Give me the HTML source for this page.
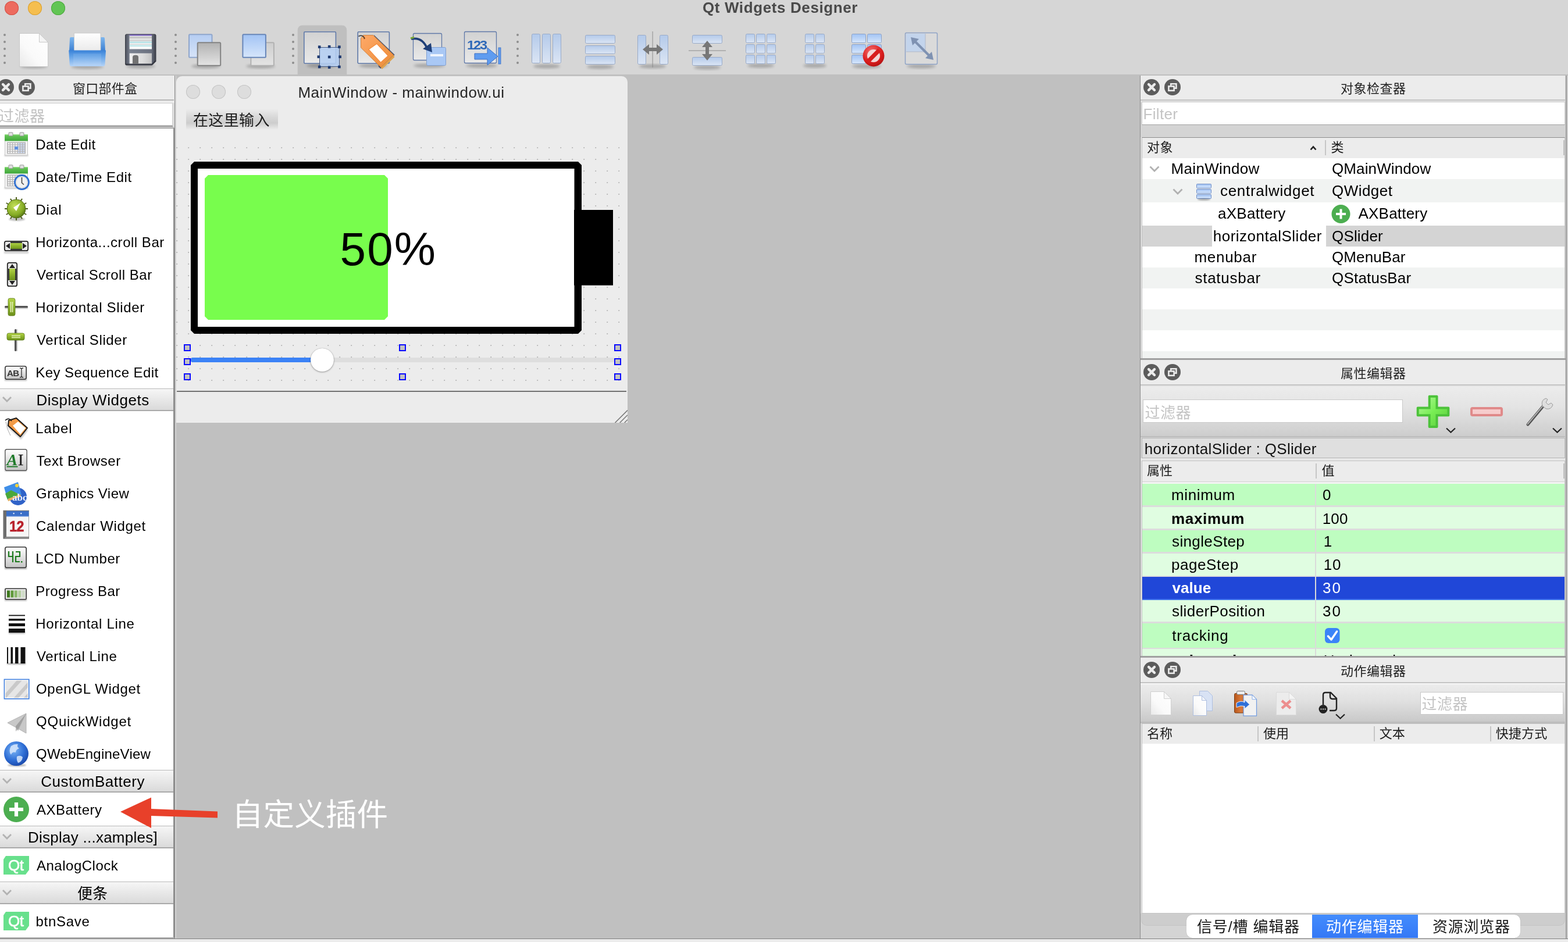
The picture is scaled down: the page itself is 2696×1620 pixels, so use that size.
<!DOCTYPE html><html><head><meta charset="utf-8"><title>Qt Widgets Designer</title><style>
html,body{margin:0;padding:0}
html{opacity:0.9999}
body{width:2696px;height:1620px;overflow:hidden;background:#d6d6d6;position:relative;font-family:"Liberation Sans",sans-serif;}
.b{position:absolute;display:block}
.t{position:absolute;white-space:nowrap;line-height:1;display:block}
.c{font-family:"Liberation Sans","Noto Sans CJK SC",sans-serif;}
</style></head><body><svg width="0" height="0" style="position:absolute"><defs>
<linearGradient id="gBlue" x1="0" y1="0" x2="0" y2="1"><stop offset="0" stop-color="#b4caea"/><stop offset="1" stop-color="#dbe5f4"/></linearGradient>
<linearGradient id="gGray" x1="0" y1="0" x2="0" y2="1"><stop offset="0" stop-color="#b2b2b2"/><stop offset="1" stop-color="#e4e4e4"/></linearGradient>
<linearGradient id="gGray2" x1="0" y1="0" x2="0" y2="1"><stop offset="0" stop-color="#cecece"/><stop offset="1" stop-color="#e4e4e4"/></linearGradient><linearGradient id="gWall" x1="0" y1="0" x2="0" y2="1"><stop offset="0" stop-color="#7db6ee"/><stop offset="1" stop-color="#3b7fd2"/></linearGradient><linearGradient id="gPaper" x1="0" y1="0" x2="0" y2="1"><stop offset="0" stop-color="#ffffff"/><stop offset="1" stop-color="#e9e9e9"/></linearGradient><linearGradient id="gFloppy" x1="0" y1="0" x2="1" y2="0"><stop offset="0" stop-color="#4c505c"/><stop offset="0.15" stop-color="#7b8290"/><stop offset="0.85" stop-color="#6b717f"/><stop offset="1" stop-color="#3c3f49"/></linearGradient><linearGradient id="gShut" x1="0" y1="0" x2="1" y2="0"><stop offset="0" stop-color="#f0f0f0"/><stop offset="0.6" stop-color="#dcdcdc"/><stop offset="1" stop-color="#c4c4c4"/></linearGradient><linearGradient id="gTag" x1="0" y1="0" x2="1" y2="1"><stop offset="0" stop-color="#ffa968"/><stop offset="1" stop-color="#ea8c38"/></linearGradient>
<linearGradient id="gDoc" x1="1" y1="0" x2="0" y2="1"><stop offset="0" stop-color="#ffffff"/><stop offset="0.6" stop-color="#fafafa"/><stop offset="1" stop-color="#e9e9e9"/></linearGradient><linearGradient id="gClip" x1="0" y1="0" x2="1" y2="0"><stop offset="0" stop-color="#b8571c"/><stop offset="0.5" stop-color="#d97a3a"/><stop offset="1" stop-color="#c0602a"/></linearGradient>
<linearGradient id="gTray" x1="0" y1="0" x2="0" y2="1"><stop offset="0" stop-color="#3a82d8"/><stop offset="0.35" stop-color="#5e9fe6"/><stop offset="1" stop-color="#b4d3f7"/></linearGradient>
<linearGradient id="gSq" x1="0" y1="0" x2="0" y2="1"><stop offset="0" stop-color="#d2d2d2"/><stop offset="1" stop-color="#e9e9e9"/></linearGradient>
<linearGradient id="gLB" x1="0" y1="0" x2="0" y2="1"><stop offset="0" stop-color="#a2c3f4"/><stop offset="1" stop-color="#d6e6fb"/></linearGradient><linearGradient id="gLB2" x1="0" y1="0" x2="0" y2="1"><stop offset="0" stop-color="#b5cdf2"/><stop offset="1" stop-color="#d6e3f8"/></linearGradient>
<linearGradient id="gGreenBtn" x1="0" y1="0" x2="0" y2="1"><stop offset="0" stop-color="#b5d44a"/><stop offset="0.5" stop-color="#8db32a"/><stop offset="1" stop-color="#6c8f1c"/></linearGradient>
<linearGradient id="gCal" x1="0" y1="0" x2="0" y2="1"><stop offset="0" stop-color="#6ccb5c"/><stop offset="1" stop-color="#3fa63a"/></linearGradient>
<linearGradient id="gBtn" x1="0" y1="0" x2="0" y2="1"><stop offset="0" stop-color="#ffffff"/><stop offset="1" stop-color="#c4c4c4"/></linearGradient>
<radialGradient id="gGlobe" cx="0.4" cy="0.35" r="0.7"><stop offset="0" stop-color="#7db6f5"/><stop offset="0.6" stop-color="#2f6fd6"/><stop offset="1" stop-color="#1846a8"/></radialGradient>
<radialGradient id="gRed" cx="0.4" cy="0.3" r="0.8"><stop offset="0" stop-color="#f47070"/><stop offset="0.6" stop-color="#dc1f1f"/><stop offset="1" stop-color="#a80e0e"/></radialGradient>
<radialGradient id="gDial" cx="0.4" cy="0.35" r="0.7"><stop offset="0" stop-color="#c4e05a"/><stop offset="0.7" stop-color="#84ab24"/><stop offset="1" stop-color="#4e6a12"/></radialGradient>
<linearGradient id="gPlusIn" x1="0" y1="0" x2="1" y2="1"><stop offset="0" stop-color="#b4f79c"/><stop offset="0.5" stop-color="#78ee54"/><stop offset="1" stop-color="#5ccc3e"/></linearGradient><linearGradient id="gPlus" x1="0" y1="0" x2="0" y2="1"><stop offset="0" stop-color="#7be05a"/><stop offset="1" stop-color="#2fa81e"/></linearGradient>
<filter id="sh" x="-20%" y="-20%" width="140%" height="150%"><feGaussianBlur stdDeviation="2"/></filter>
<filter id="sh1" x="-20%" y="-20%" width="140%" height="150%"><feGaussianBlur stdDeviation="1.2"/></filter>
</defs></svg><div class="b" style="left:0px;top:128px;width:2696px;height:1486px;background:#c0c0c0;"></div><div class="b" style="left:302.5px;top:130.6px;width:776.5px;height:596.4px;background:#ececec;border-radius:10px 10px 0 0;"></div><div class="b" style="left:319.6px;top:146px;width:24px;height:24px;background:#dddddd;border-radius:50%;box-shadow:inset 0 0 0 1px #c4c4c4;"></div><div class="b" style="left:363.6px;top:146px;width:24px;height:24px;background:#dddddd;border-radius:50%;box-shadow:inset 0 0 0 1px #c4c4c4;"></div><div class="b" style="left:407.6px;top:146px;width:24px;height:24px;background:#dddddd;border-radius:50%;box-shadow:inset 0 0 0 1px #c4c4c4;"></div><span class="t " style="left:512.40px;top:145.99px;font-size:26px;color:#262626;letter-spacing:0.540px;">MainWindow - mainwindow.ui</span><div class="b" style="left:320px;top:187px;width:158px;height:36.4px;background:linear-gradient(#ececec 0%,#e6e6e6 12%,#d8d8d8 40%,#cdcdcd 68%,#dcdcdc 84%,#ececec 100%);"></div><span class="t c" style="left:332.00px;top:194.10px;font-size:26px;color:#1c1c1c;letter-spacing:0.37px;">在这里输入</span><svg class="b" style="left:303px;top:253px" width="776" height="403"><defs><pattern id="gd" width="20" height="20" patternUnits="userSpaceOnUse"><rect x="0.3" y="0.2" width="1.8" height="1.8" fill="#b2b2b2"/></pattern></defs><rect width="776" height="403" fill="url(#gd)"/></svg><svg class="b" style="left:320px;top:270px;" width="750" height="310" viewBox="320 270 750 310"><path d="M334 278h660l6 6v284l-6 6h-660l-6-6v-284z" fill="#000"/><rect x="340" y="290" width="647.5" height="272" fill="#fff"/><rect x="987" y="361" width="67" height="129.7" fill="#000"/><path d="M358 301h303l6 6v237l-6 6h-303l-6-6v-237z" fill="#78fd4d"/></svg><span class="t " style="left:584.60px;top:388.56px;font-size:80px;color:#000;letter-spacing:2.050px;">50%</span><div class="b" style="left:328px;top:615px;width:728px;height:8px;background:#dedede;border-radius:3px;"></div><div class="b" style="left:328px;top:615px;width:228px;height:8px;background:#3b82f6;border-radius:3px 0 0 3px;"></div><div class="b" style="left:534px;top:599px;width:40px;height:40px;background:#fff;border-radius:50%;box-shadow:0 1px 3px rgba(0,0,0,0.35),0 0 1px rgba(0,0,0,0.3);"></div><div class="b" style="left:316px;top:592px;width:12px;height:12px;background:#c2c2c2;border:2px solid #0a0aff;box-sizing:border-box;"></div><div class="b" style="left:316px;top:642px;width:12px;height:12px;background:#c2c2c2;border:2px solid #0a0aff;box-sizing:border-box;"></div><div class="b" style="left:686px;top:592px;width:12px;height:12px;background:#c2c2c2;border:2px solid #0a0aff;box-sizing:border-box;"></div><div class="b" style="left:686px;top:642px;width:12px;height:12px;background:#c2c2c2;border:2px solid #0a0aff;box-sizing:border-box;"></div><div class="b" style="left:1056px;top:592px;width:12px;height:12px;background:#c2c2c2;border:2px solid #0a0aff;box-sizing:border-box;"></div><div class="b" style="left:1056px;top:642px;width:12px;height:12px;background:#c2c2c2;border:2px solid #0a0aff;box-sizing:border-box;"></div><div class="b" style="left:316px;top:616px;width:12px;height:12px;background:#c2c2c2;border:2px solid #0a0aff;box-sizing:border-box;"></div><div class="b" style="left:1056px;top:616px;width:12px;height:12px;background:#c2c2c2;border:2px solid #0a0aff;box-sizing:border-box;"></div><div class="b" style="left:304px;top:672px;width:773px;height:1.5px;background:#727272;"></div><svg class="b" style="left:1050px;top:700px;" width="29" height="27" viewBox="1050 700 29 27"><path d="M1057.5 727L1079 705.5M1065.7 727L1079 713.7M1073.7 727L1079 721.7" stroke="#7a7a7a" stroke-width="1.6" fill="none"/></svg><div class="b" style="left:8px;top:2px;width:24px;height:24px;background:#ed6b5f;border-radius:50%;box-shadow:inset 0 0 0 1px #d25248;"></div><div class="b" style="left:48px;top:2px;width:24px;height:24px;background:#f5be4f;border-radius:50%;box-shadow:inset 0 0 0 1px #d8a033;"></div><div class="b" style="left:88px;top:2px;width:24px;height:24px;background:#62c554;border-radius:50%;box-shadow:inset 0 0 0 1px #4da83f;"></div><span class="t " style="left:1208.00px;top:-0.01px;font-size:26px;color:#4a4a4a;font-weight:700;letter-spacing:0.611px;">Qt Widgets Designer</span><div class="b" style="left:6px;top:58px;width:4px;height:4px;background:#8e8e8e;border-radius:50%;"></div><div class="b" style="left:6px;top:70px;width:4px;height:4px;background:#8e8e8e;border-radius:50%;"></div><div class="b" style="left:6px;top:82px;width:4px;height:4px;background:#8e8e8e;border-radius:50%;"></div><div class="b" style="left:6px;top:94px;width:4px;height:4px;background:#8e8e8e;border-radius:50%;"></div><div class="b" style="left:6px;top:106px;width:4px;height:4px;background:#8e8e8e;border-radius:50%;"></div><div class="b" style="left:300px;top:58px;width:4px;height:4px;background:#8e8e8e;border-radius:50%;"></div><div class="b" style="left:300px;top:70px;width:4px;height:4px;background:#8e8e8e;border-radius:50%;"></div><div class="b" style="left:300px;top:82px;width:4px;height:4px;background:#8e8e8e;border-radius:50%;"></div><div class="b" style="left:300px;top:94px;width:4px;height:4px;background:#8e8e8e;border-radius:50%;"></div><div class="b" style="left:300px;top:106px;width:4px;height:4px;background:#8e8e8e;border-radius:50%;"></div><div class="b" style="left:502px;top:58px;width:4px;height:4px;background:#8e8e8e;border-radius:50%;"></div><div class="b" style="left:502px;top:70px;width:4px;height:4px;background:#8e8e8e;border-radius:50%;"></div><div class="b" style="left:502px;top:82px;width:4px;height:4px;background:#8e8e8e;border-radius:50%;"></div><div class="b" style="left:502px;top:94px;width:4px;height:4px;background:#8e8e8e;border-radius:50%;"></div><div class="b" style="left:502px;top:106px;width:4px;height:4px;background:#8e8e8e;border-radius:50%;"></div><div class="b" style="left:888px;top:58px;width:4px;height:4px;background:#8e8e8e;border-radius:50%;"></div><div class="b" style="left:888px;top:70px;width:4px;height:4px;background:#8e8e8e;border-radius:50%;"></div><div class="b" style="left:888px;top:82px;width:4px;height:4px;background:#8e8e8e;border-radius:50%;"></div><div class="b" style="left:888px;top:94px;width:4px;height:4px;background:#8e8e8e;border-radius:50%;"></div><div class="b" style="left:888px;top:106px;width:4px;height:4px;background:#8e8e8e;border-radius:50%;"></div><svg class="b" style="left:0px;top:40px;" width="1700" height="90" viewBox="0 40 1700 90"><ellipse cx="58" cy="114" rx="23.0" ry="3.5" fill="#000" opacity="0.22" filter="url(#sh)"/><path d="M33.5 57.5h34l15 15v42h-49z" fill="url(#gDoc)" stroke="#c9c9c9"/><path d="M67.5 57.5v15h15z" fill="#f4f4f4" stroke="#c9c9c9" stroke-linejoin="round"/><ellipse cx="150" cy="115" rx="28.0" ry="3.5" fill="#000" opacity="0.22" filter="url(#sh)"/><path d="M120 66q0-2 2-2h6v24h-9zM172 64h6q2 0 2 2l1 22h-9z" fill="url(#gWall)"/><rect x="127.5" y="57" width="45.5" height="32" fill="url(#gPaper)" stroke="#c8c8c8" stroke-width="0.8"/><path d="M118.2 86.5h63.8l-1.5 24.5q-0.2 3-3 3h-54.8q-2.8 0-3-3z" fill="url(#gTray)"/><path d="M126 92h48v20h-48z" fill="#fff" opacity="0.10"/><ellipse cx="242" cy="114" rx="25.0" ry="3.5" fill="#000" opacity="0.22" filter="url(#sh)"/><path d="M215.5 61q0-2 2-2h48.5q2 0 2 2v44.5l-6.5 6.5h-44q-2 0-2-2z" fill="url(#gFloppy)" stroke="#3a3d46" stroke-width="1"/><rect x="222.7" y="60" width="38.3" height="24.5" fill="#fbfbfb"/><rect x="222.7" y="59.6" width="38.3" height="1.8" fill="#6a4fb8"/><rect x="222.7" y="62.5" width="38.3" height="3.5" fill="#c6c6c6"/><rect x="222.7" y="66" width="38.3" height="3" fill="#e2e2e2"/><rect x="222.7" y="71.5" width="38.3" height="2.6" fill="#b4e2e6"/><rect x="222.7" y="69" width="38.3" height="2" fill="#d2d2d2"/><rect x="222.7" y="77.5" width="38.3" height="2.6" fill="#bfe8ea"/><rect x="222.7" y="75.3" width="38.3" height="1.6" fill="#d8d8d8"/><rect x="222.7" y="91.6" width="38.3" height="18" fill="url(#gShut)"/><path d="M228 109.6v-11.5q0-3.4 5-3.4t5 3.4v11.5z" fill="#727272"/><path d="M216 110.5h45.5l6-6" fill="none" stroke="#2e3038" stroke-width="1.6"/><ellipse cx="354" cy="114" rx="25.0" ry="3.5" fill="#000" opacity="0.22" filter="url(#sh)"/><rect x="325" y="59.2" width="39.5" height="39.5" rx="1.5" fill="url(#gLB2)" stroke="#8fa6cc" stroke-width="2"/><rect x="339.7" y="73.2" width="39.5" height="39.5" rx="1.5" fill="url(#gGray)" stroke="#838383" stroke-width="2"/><ellipse cx="448" cy="114" rx="25.0" ry="3.5" fill="#000" opacity="0.22" filter="url(#sh)"/><rect x="431.4" y="73.2" width="39.5" height="39.5" rx="1.5" fill="url(#gGray2)" stroke="#b2b2b2" stroke-width="2"/><rect x="417.4" y="59.2" width="39.5" height="39.5" rx="1.5" fill="url(#gLB)" stroke="#6886b8" stroke-width="2"/><path d="M511.7 128v-75.5q0-9 9-9h66.5q9 0 9 9v75.5z" fill="#bfbfbf"/><ellipse cx="552" cy="113" rx="25.0" ry="3.5" fill="#000" opacity="0.22" filter="url(#sh)"/><rect x="522.8" y="54.8" width="54.6" height="54.2" rx="1.5" fill="url(#gSq)" stroke="#5e78a8" stroke-width="1.6"/><rect x="549.5" y="81.5" width="34" height="33" fill="#b4cef3" fill-opacity="0.88" stroke="#3a4f78" stroke-width="0.9"/><rect x="546.9000000000001" y="78.4" width="4.6" height="4.6" fill="#1f3a70"/><rect x="581.1" y="78.4" width="4.6" height="4.6" fill="#1f3a70"/><rect x="546.9000000000001" y="112.7" width="4.6" height="4.6" fill="#1f3a70"/><rect x="581.1" y="112.7" width="4.6" height="4.6" fill="#1f3a70"/><rect x="563.9000000000001" y="77.9" width="4.6" height="4.6" fill="#1f3a70"/><rect x="545.5" y="95.4" width="4.6" height="4.6" fill="#1f3a70"/><rect x="582.3000000000001" y="95.4" width="4.6" height="4.6" fill="#1f3a70"/><rect x="563.9000000000001" y="113.5" width="4.6" height="4.6" fill="#1f3a70"/><rect x="563.9000000000001" y="95.7" width="4.6" height="4.6" fill="#1f3a70"/><ellipse cx="642" cy="113" rx="25.0" ry="3.5" fill="#000" opacity="0.22" filter="url(#sh)"/><rect x="615.2" y="54.8" width="54.2" height="54.2" rx="1.5" fill="url(#gSq)" stroke="#5e78a8" stroke-width="1.6"/><path d="M643 60l35.5 34l-3 4.5l-21 19.5l-3.5-3z" fill="#2f3f63" opacity="0.85"/><path d="M620.5 66l4-5.4h17.2l35.2 34.1l-21.9 21.2l-34.5-33.9z" fill="url(#gTag)" stroke="#c87428" stroke-width="0.8" stroke-linejoin="round"/><path d="M655 115.9l21.9-21.2l1.5 3.6l-21.6 20.6z" fill="#e0a24e"/><path d="M633.8 84.9l14-9.7l19.4 20.7l-12.7 11.5z" fill="#fff" stroke="#f58a3a" stroke-width="1.2" stroke-linejoin="round"/><path d="M616.5 62.5q6-3.5 10 2.5" fill="none" stroke="#333" stroke-width="1.6"/><circle cx="626.5" cy="66" r="1.2" fill="#7a3a10"/><ellipse cx="738" cy="113" rx="27.0" ry="3.5" fill="#000" opacity="0.22" filter="url(#sh)"/><rect x="710.5" y="57.5" width="49" height="46" rx="2" fill="url(#gSq)" stroke="#5f78a8" stroke-width="1.3"/><rect x="733.5" y="81.5" width="33" height="31" rx="2" fill="#a9c8f5" stroke="#7f9fd2"/><rect x="740" y="93" width="22" height="4" fill="#eef4fd"/><path d="M707 67q20-4 28 18" fill="none" stroke="#1f3f78" stroke-width="3.5"/><path d="M727 84l16 6l-2-16z" fill="#1f3f78"/><path d="M706 66l6-2" stroke="#7aa63a" stroke-width="3"/><ellipse cx="828" cy="113" rx="27.0" ry="3.5" fill="#000" opacity="0.22" filter="url(#sh)"/><rect x="798.5" y="54.5" width="55" height="54" rx="2" fill="url(#gSq)" stroke="#5f78a8" stroke-width="1.3"/><text x="803" y="85" font-family="Liberation Sans, sans-serif" font-size="22" font-weight="700" fill="#2e68b8" letter-spacing="-2" textLength="33" lengthAdjust="spacingAndGlyphs">123</text><path d="M816 92h22v-10l18 15l-18 15v-10h-22z" fill="#5f9cf0" stroke="#3a6fc4" stroke-width="1"/><rect x="857" y="82" width="4" height="28" fill="#5f9cf0" stroke="#3a6fc4" stroke-width="0.8"/><ellipse cx="940" cy="114" rx="23.0" ry="3.5" fill="#000" opacity="0.22" filter="url(#sh)"/><rect x="914.5" y="58.5" width="14" height="50" rx="2" fill="url(#gBlue)" stroke="#98aac8"/><rect x="932.5" y="58.5" width="14" height="50" rx="2" fill="url(#gBlue)" stroke="#98aac8"/><rect x="950.5" y="58.5" width="14" height="50" rx="2" fill="url(#gBlue)" stroke="#98aac8"/><ellipse cx="1032" cy="115" rx="23.0" ry="3.5" fill="#000" opacity="0.22" filter="url(#sh)"/><rect x="1006.5" y="60.5" width="51" height="14" rx="2" fill="url(#gBlue)" stroke="#98aac8"/><rect x="1006.5" y="78.5" width="51" height="14" rx="2" fill="url(#gBlue)" stroke="#98aac8"/><rect x="1006.5" y="96.5" width="51" height="14" rx="2" fill="url(#gBlue)" stroke="#98aac8"/><ellipse cx="1122" cy="114" rx="23.0" ry="3.5" fill="#000" opacity="0.22" filter="url(#sh)"/><rect x="1096.5" y="60.5" width="14" height="50" rx="2" fill="url(#gBlue)" stroke="#98aac8"/><rect x="1134.5" y="60.5" width="14" height="50" rx="2" fill="url(#gBlue)" stroke="#98aac8"/><rect x="1121.5" y="54" width="1.2" height="62" fill="#8a8a8a" opacity="0.8"/><path d="M1105 85l11-9v6h13v-6l11 9l-11 9v-6h-13v6z" fill="#777"/><ellipse cx="1216" cy="116" rx="23.0" ry="3.5" fill="#000" opacity="0.22" filter="url(#sh)"/><rect x="1190.5" y="60.5" width="51" height="14" rx="2" fill="url(#gBlue)" stroke="#98aac8"/><rect x="1190.5" y="98.5" width="51" height="14" rx="2" fill="url(#gBlue)" stroke="#98aac8"/><rect x="1184" y="86.5" width="64" height="1.2" fill="#8a8a8a" opacity="0.8"/><path d="M1216 70l9 11h-6v12h6l-9 11l-9-11h6v-12h-6z" fill="#777"/><ellipse cx="1308" cy="113" rx="23.0" ry="3.5" fill="#000" opacity="0.22" filter="url(#sh)"/><rect x="1282.5" y="58.5" width="15" height="15" rx="2" fill="url(#gBlue)" stroke="#98aac8"/><rect x="1300.5" y="58.5" width="15" height="15" rx="2" fill="url(#gBlue)" stroke="#98aac8"/><rect x="1318.5" y="58.5" width="15" height="15" rx="2" fill="url(#gBlue)" stroke="#98aac8"/><rect x="1282.5" y="76.5" width="15" height="15" rx="2" fill="url(#gBlue)" stroke="#98aac8"/><rect x="1300.5" y="76.5" width="15" height="15" rx="2" fill="url(#gBlue)" stroke="#98aac8"/><rect x="1318.5" y="76.5" width="15" height="15" rx="2" fill="url(#gBlue)" stroke="#98aac8"/><rect x="1282.5" y="94.5" width="15" height="15" rx="2" fill="url(#gBlue)" stroke="#98aac8"/><rect x="1300.5" y="94.5" width="15" height="15" rx="2" fill="url(#gBlue)" stroke="#98aac8"/><rect x="1318.5" y="94.5" width="15" height="15" rx="2" fill="url(#gBlue)" stroke="#98aac8"/><ellipse cx="1401" cy="113" rx="20.0" ry="3.5" fill="#000" opacity="0.22" filter="url(#sh)"/><rect x="1384.5" y="58.5" width="15" height="15" rx="2" fill="url(#gBlue)" stroke="#98aac8"/><rect x="1402.5" y="58.5" width="15" height="15" rx="2" fill="url(#gBlue)" stroke="#98aac8"/><rect x="1384.5" y="76.5" width="15" height="15" rx="2" fill="url(#gBlue)" stroke="#98aac8"/><rect x="1402.5" y="76.5" width="15" height="15" rx="2" fill="url(#gBlue)" stroke="#98aac8"/><rect x="1384.5" y="94.5" width="15" height="15" rx="2" fill="url(#gBlue)" stroke="#98aac8"/><rect x="1402.5" y="94.5" width="15" height="15" rx="2" fill="url(#gBlue)" stroke="#98aac8"/><ellipse cx="1490" cy="114" rx="25.0" ry="3.5" fill="#000" opacity="0.22" filter="url(#sh)"/><rect x="1464.5" y="58.5" width="24" height="15" rx="2" fill="url(#gLB)" stroke="#8ea3c6"/><rect x="1491.5" y="58.5" width="24" height="15" rx="2" fill="url(#gLB)" stroke="#8ea3c6"/><rect x="1464.5" y="76.5" width="24" height="15" rx="2" fill="url(#gLB)" stroke="#8ea3c6"/><rect x="1491.5" y="76.5" width="24" height="15" rx="2" fill="url(#gLB)" stroke="#8ea3c6"/><rect x="1464.5" y="94.5" width="24" height="15" rx="2" fill="url(#gLB)" stroke="#8ea3c6"/><rect x="1491.5" y="94.5" width="24" height="15" rx="2" fill="url(#gLB)" stroke="#8ea3c6"/><circle cx="1502" cy="96" r="18.5" fill="url(#gRed)"/><circle cx="1502" cy="96" r="11" fill="#f3d6d6"/><path d="M1492 106l20-20" stroke="#d81e1e" stroke-width="7"/><ellipse cx="1584" cy="114" rx="25.0" ry="3.5" fill="#000" opacity="0.22" filter="url(#sh)"/><rect x="1556.5" y="56.5" width="55" height="54" rx="2" fill="#dadada" stroke="#8ea3c6" stroke-width="1.5"/><rect x="1558" y="58" width="33" height="31" fill="#c3d4ec"/><path d="M1558 89h33v-31" fill="none" stroke="#b0b8c8"/><path d="M1566 64l14 3l-4 4l22 22l4-4l3 14l-14-3l4-4l-22-22l-4 4z" fill="#7f92b2"/></svg><div class="b" style="left:0px;top:130px;width:300px;height:47px;background:#ececec;"></div><div class="b" style="left:0px;top:171px;width:299px;height:2px;background:#b6b6b6;"></div><svg class="b" style="left:-6px;top:134px;" width="70" height="32" viewBox="-6 134 70 32"><circle cx="10" cy="150" r="14" fill="#5c5c5c"/><path d="M5 145l10 10M15 145l-10 10" stroke="#ececec" stroke-width="4.4" stroke-linecap="round"/><circle cx="46" cy="150" r="14" fill="#5c5c5c"/><path d="M43.2 147.4v-3.2h9.2v7.4h-3.2" fill="none" stroke="#ececec" stroke-width="2.6"/><rect x="39.4" y="148.4" width="9.2" height="7.4" fill="none" stroke="#ececec" stroke-width="2.6"/></svg><span class="t c" style="left:125.00px;top:141.70px;font-size:22px;color:#1e1e1e;letter-spacing:0.25px;">窗口部件盒</span><div class="b" style="left:0px;top:177px;width:300px;height:44px;background:#dcdcdc;"></div><div class="b" style="left:-2px;top:177px;width:299.2px;height:39px;background:#fff;border:1px solid #d0d0d0;box-sizing:border-box;"></div><span class="t c" style="left:-2.00px;top:186.70px;font-size:26px;color:#c2c2c2;letter-spacing:0.5px;">过滤器</span><div class="b" style="left:0px;top:216px;width:297.2px;height:2px;background:#9c9c9c;"></div><div class="b" style="left:0px;top:218px;width:300px;height:1.5px;background:#c8c8c8;"></div><div class="b" style="left:0px;top:219.5px;width:300px;height:1.7px;background:#8e8e8e;"></div><div class="b" style="left:0px;top:221px;width:298px;height:1391px;background:#fff;"></div><div class="b" style="left:298px;top:219.5px;width:2px;height:1394.5px;background:#8e8e8e;"></div><div class="b" style="left:300px;top:130px;width:1px;height:1484px;background:#8a8a8a;"></div><div class="b" style="left:301px;top:130px;width:1.5px;height:1484px;background:#d2d2d2;"></div><svg class="b" style="left:6px;top:226px;overflow:visible;" width="44" height="44" viewBox="-1 -1 44 44"><rect x="0.5" y="38.5" width="41" height="3.5" fill="#000" opacity="0.18" filter="url(#sh1)"/><rect x="1.5" y="6.5" width="39" height="33.5" fill="#f4f4f4" stroke="#c6c6c6"/><rect x="1" y="4" width="40" height="11.5" fill="url(#gCal)"/><rect x="1" y="4" width="40" height="1.5" fill="#8fdc80"/><rect x="8" y="0.8" width="7" height="6" rx="1" fill="#e0e0e0" stroke="#8e8e8e" stroke-width="0.9"/><rect x="27" y="0.8" width="7" height="6" rx="1" fill="#e0e0e0" stroke="#8e8e8e" stroke-width="0.9"/><rect x="5" y="17.5" width="32" height="20" fill="#b4b4b4"/><rect x="6.6" y="19.0" width="3" height="2.4" fill="#f6f6f6"/><rect x="10.9" y="19.0" width="3" height="2.4" fill="#f6f6f6"/><rect x="15.2" y="19.0" width="3" height="2.4" fill="#f6f6f6"/><rect x="19.5" y="19.0" width="3" height="2.4" fill="#f6f6f6"/><rect x="23.8" y="19.0" width="3" height="2.4" fill="#cfdcf4"/><rect x="28.1" y="19.0" width="3" height="2.4" fill="#cfdcf4"/><rect x="32.4" y="19.0" width="3" height="2.4" fill="#cfdcf4"/><rect x="6.6" y="22.7" width="3" height="2.4" fill="#f6f6f6"/><rect x="10.9" y="22.7" width="3" height="2.4" fill="#f6f6f6"/><rect x="15.2" y="22.7" width="3" height="2.4" fill="#f6f6f6"/><rect x="19.5" y="22.7" width="3" height="2.4" fill="#f6f6f6"/><rect x="23.8" y="22.7" width="3" height="2.4" fill="#cfdcf4"/><rect x="28.1" y="22.7" width="3" height="2.4" fill="#cfdcf4"/><rect x="32.4" y="22.7" width="3" height="2.4" fill="#cfdcf4"/><rect x="6.6" y="26.4" width="3" height="2.4" fill="#f6f6f6"/><rect x="10.9" y="26.4" width="3" height="2.4" fill="#f6f6f6"/><rect x="15.2" y="26.4" width="3" height="2.4" fill="#f6f6f6"/><rect x="19.5" y="26.4" width="3" height="2.4" fill="#4a86e8"/><rect x="23.8" y="26.4" width="3" height="2.4" fill="#cfdcf4"/><rect x="28.1" y="26.4" width="3" height="2.4" fill="#cfdcf4"/><rect x="32.4" y="26.4" width="3" height="2.4" fill="#cfdcf4"/><rect x="6.6" y="30.1" width="3" height="2.4" fill="#f6f6f6"/><rect x="10.9" y="30.1" width="3" height="2.4" fill="#f6f6f6"/><rect x="15.2" y="30.1" width="3" height="2.4" fill="#f6f6f6"/><rect x="19.5" y="30.1" width="3" height="2.4" fill="#f6f6f6"/><rect x="23.8" y="30.1" width="3" height="2.4" fill="#cfdcf4"/><rect x="28.1" y="30.1" width="3" height="2.4" fill="#cfdcf4"/><rect x="32.4" y="30.1" width="3" height="2.4" fill="#cfdcf4"/><rect x="6.6" y="33.8" width="3" height="2.4" fill="#f6f6f6"/><rect x="10.9" y="33.8" width="3" height="2.4" fill="#f6f6f6"/><rect x="15.2" y="33.8" width="3" height="2.4" fill="#f6f6f6"/><rect x="19.5" y="33.8" width="3" height="2.4" fill="#f6f6f6"/><rect x="23.8" y="33.8" width="3" height="2.4" fill="#cfdcf4"/><rect x="28.1" y="33.8" width="3" height="2.4" fill="#cfdcf4"/><rect x="32.4" y="33.8" width="3" height="2.4" fill="#cfdcf4"/><rect x="18.7" y="25.6" width="4.6" height="4" fill="none" stroke="#4a86e8" stroke-width="1.1"/></svg><span class="t " style="left:61.25px;top:236.68px;font-size:24px;color:#000;letter-spacing:0.531px;">Date Edit</span><svg class="b" style="left:6px;top:282px;overflow:visible;" width="44" height="44" viewBox="-1 -1 44 44"><rect x="0.5" y="38.5" width="41" height="3.5" fill="#000" opacity="0.18" filter="url(#sh1)"/><rect x="1.5" y="6.5" width="39" height="33.5" fill="#f4f4f4" stroke="#c6c6c6"/><rect x="1" y="4" width="40" height="11.5" fill="url(#gCal)"/><rect x="1" y="4" width="40" height="1.5" fill="#8fdc80"/><rect x="8" y="0.8" width="7" height="6" rx="1" fill="#e0e0e0" stroke="#8e8e8e" stroke-width="0.9"/><rect x="27" y="0.8" width="7" height="6" rx="1" fill="#e0e0e0" stroke="#8e8e8e" stroke-width="0.9"/><rect x="5" y="17.5" width="32" height="20" fill="#b4b4b4"/><rect x="6.6" y="19.0" width="3" height="2.4" fill="#f6f6f6"/><rect x="10.9" y="19.0" width="3" height="2.4" fill="#f6f6f6"/><rect x="15.2" y="19.0" width="3" height="2.4" fill="#f6f6f6"/><rect x="19.5" y="19.0" width="3" height="2.4" fill="#f6f6f6"/><rect x="23.8" y="19.0" width="3" height="2.4" fill="#cfdcf4"/><rect x="28.1" y="19.0" width="3" height="2.4" fill="#cfdcf4"/><rect x="32.4" y="19.0" width="3" height="2.4" fill="#cfdcf4"/><rect x="6.6" y="22.7" width="3" height="2.4" fill="#f6f6f6"/><rect x="10.9" y="22.7" width="3" height="2.4" fill="#f6f6f6"/><rect x="15.2" y="22.7" width="3" height="2.4" fill="#f6f6f6"/><rect x="19.5" y="22.7" width="3" height="2.4" fill="#f6f6f6"/><rect x="23.8" y="22.7" width="3" height="2.4" fill="#cfdcf4"/><rect x="28.1" y="22.7" width="3" height="2.4" fill="#cfdcf4"/><rect x="32.4" y="22.7" width="3" height="2.4" fill="#cfdcf4"/><rect x="6.6" y="26.4" width="3" height="2.4" fill="#f6f6f6"/><rect x="10.9" y="26.4" width="3" height="2.4" fill="#f6f6f6"/><rect x="15.2" y="26.4" width="3" height="2.4" fill="#f6f6f6"/><rect x="19.5" y="26.4" width="3" height="2.4" fill="#4a86e8"/><rect x="23.8" y="26.4" width="3" height="2.4" fill="#cfdcf4"/><rect x="28.1" y="26.4" width="3" height="2.4" fill="#cfdcf4"/><rect x="32.4" y="26.4" width="3" height="2.4" fill="#cfdcf4"/><rect x="6.6" y="30.1" width="3" height="2.4" fill="#f6f6f6"/><rect x="10.9" y="30.1" width="3" height="2.4" fill="#f6f6f6"/><rect x="15.2" y="30.1" width="3" height="2.4" fill="#f6f6f6"/><rect x="19.5" y="30.1" width="3" height="2.4" fill="#f6f6f6"/><rect x="23.8" y="30.1" width="3" height="2.4" fill="#cfdcf4"/><rect x="28.1" y="30.1" width="3" height="2.4" fill="#cfdcf4"/><rect x="32.4" y="30.1" width="3" height="2.4" fill="#cfdcf4"/><rect x="6.6" y="33.8" width="3" height="2.4" fill="#f6f6f6"/><rect x="10.9" y="33.8" width="3" height="2.4" fill="#f6f6f6"/><rect x="15.2" y="33.8" width="3" height="2.4" fill="#f6f6f6"/><rect x="19.5" y="33.8" width="3" height="2.4" fill="#f6f6f6"/><rect x="23.8" y="33.8" width="3" height="2.4" fill="#cfdcf4"/><rect x="28.1" y="33.8" width="3" height="2.4" fill="#cfdcf4"/><rect x="32.4" y="33.8" width="3" height="2.4" fill="#cfdcf4"/><rect x="18.7" y="25.6" width="4.6" height="4" fill="none" stroke="#4a86e8" stroke-width="1.1"/><circle cx="30.5" cy="30.5" r="12" fill="#f2f2f2" stroke="#2f6fd0" stroke-width="2.8"/><circle cx="30.5" cy="30.5" r="9.5" fill="none" stroke="#d8d8d8" stroke-width="1"/><path d="M30.5 22v9.5l3.5 3" fill="none" stroke="#444" stroke-width="1.6"/></svg><span class="t " style="left:61.25px;top:292.68px;font-size:24px;color:#000;letter-spacing:0.538px;">Date/Time Edit</span><svg class="b" style="left:6px;top:338px;overflow:visible;" width="44" height="44" viewBox="-1 -1 44 44"><ellipse cx="22" cy="38" rx="14" ry="3" fill="#000" opacity="0.25" filter="url(#sh1)"/><path d="M36.0 20.0L41.0 20.0" stroke="#4e5d1e" stroke-width="2"/><path d="M34.0 27.5L38.3 30.0" stroke="#4e5d1e" stroke-width="2"/><path d="M28.5 33.0L31.0 37.3" stroke="#4e5d1e" stroke-width="2"/><path d="M21.0 35.0L21.0 40.0" stroke="#4e5d1e" stroke-width="2"/><path d="M13.5 33.0L11.0 37.3" stroke="#4e5d1e" stroke-width="2"/><path d="M8.0 27.5L3.7 30.0" stroke="#4e5d1e" stroke-width="2"/><path d="M6.0 20.0L1.0 20.0" stroke="#4e5d1e" stroke-width="2"/><path d="M8.0 12.5L3.7 10.0" stroke="#4e5d1e" stroke-width="2"/><path d="M13.5 7.0L11.0 2.7" stroke="#4e5d1e" stroke-width="2"/><path d="M21.0 5.0L21.0 0.0" stroke="#4e5d1e" stroke-width="2"/><path d="M28.5 7.0L31.0 2.7" stroke="#4e5d1e" stroke-width="2"/><path d="M34.0 12.5L38.3 10.0" stroke="#4e5d1e" stroke-width="2"/><circle cx="21" cy="20" r="16" fill="url(#gDial)" stroke="#4f6a14" stroke-width="1"/><path d="M28 10l-12 8l5 6z" fill="#fff"/></svg><span class="t " style="left:61.25px;top:348.68px;font-size:24px;color:#000;letter-spacing:1.000px;">Dial</span><svg class="b" style="left:6px;top:394px;overflow:visible;" width="44" height="44" viewBox="-1 -1 44 44"><g transform="translate(0,7)"><rect x="0" y="30" width="42" height="4" fill="#000" opacity="0.18" filter="url(#sh1)"/><rect x="0.8" y="12.8" width="40.4" height="16.4" rx="3" fill="#e8e8e8" stroke="#222" stroke-width="1.8"/><rect x="11" y="15" width="20" height="12" fill="url(#gGreenBtn)"/><rect x="11" y="14" width="20" height="2" fill="#333"/><rect x="11" y="26" width="20" height="2" fill="#333"/><path d="M3 21l7-5v10zM39 21l-7-5v10z" fill="#222"/></g></svg><span class="t " style="left:61.25px;top:404.68px;font-size:24px;color:#000;letter-spacing:0.512px;">Horizonta...croll Bar</span><svg class="b" style="left:6px;top:450px;overflow:visible;" width="44" height="44" viewBox="-1 -1 44 44"><rect x="5.8" y="0.8" width="16.4" height="40.4" rx="3" fill="#e8e8e8" stroke="#222" stroke-width="1.8"/><rect x="8" y="11" width="12" height="20" fill="url(#gGreenBtn)"/><rect x="7" y="11" width="2" height="20" fill="#333"/><rect x="19" y="11" width="2" height="20" fill="#333"/><path d="M14 3l-5 7h10zM14 39l-5-7h10z" fill="#222"/></svg><span class="t " style="left:63.00px;top:460.68px;font-size:24px;color:#000;letter-spacing:0.486px;">Vertical Scroll Bar</span><svg class="b" style="left:6px;top:506px;overflow:visible;" width="44" height="44" viewBox="-1 -1 44 44"><rect x="1" y="19" width="40" height="3.5" rx="1.5" fill="#555"/><rect x="1" y="22.5" width="40" height="2" fill="#000" opacity="0.15"/><rect x="7" y="6" width="12" height="30" rx="3" fill="url(#gGreenBtn)" stroke="#5c7a18" stroke-width="0.8"/><path d="M11.5 12v18M14.5 12v18" stroke="#eaf5c0" stroke-width="1.6"/></svg><span class="t " style="left:61.25px;top:516.68px;font-size:24px;color:#000;letter-spacing:0.688px;">Horizontal Slider</span><svg class="b" style="left:6px;top:562px;overflow:visible;" width="44" height="44" viewBox="-1 -1 44 44"><rect x="18" y="3" width="3.5" height="38" rx="1.5" fill="#555"/><rect x="21.5" y="3" width="2" height="38" fill="#000" opacity="0.15"/><rect x="5" y="10" width="30" height="12" rx="3" fill="url(#gGreenBtn)" stroke="#5c7a18" stroke-width="0.8"/><path d="M13 14.5h15M13 17.5h15" stroke="#eaf5c0" stroke-width="1.6"/></svg><span class="t " style="left:63.00px;top:572.68px;font-size:24px;color:#000;letter-spacing:0.607px;">Vertical Slider</span><svg class="b" style="left:6px;top:618px;overflow:visible;" width="44" height="44" viewBox="-1 -1 44 44"><rect x="1" y="32" width="38" height="4" fill="#000" opacity="0.25" filter="url(#sh1)"/><rect x="1.8" y="10.8" width="36.4" height="22.4" rx="3" fill="url(#gBtn)" stroke="#333" stroke-width="1.6"/><text x="5" y="28" font-family="Liberation Sans, sans-serif" font-weight="700" font-size="15" fill="#333" letter-spacing="-0.5">AB</text><path d="M30 15v14M27 14q3 0 3 2q0-2 3-2M27 30q3 0 3-2q0 2 3 2" fill="none" stroke="#333" stroke-width="1.3"/></svg><span class="t " style="left:61.25px;top:628.68px;font-size:24px;color:#000;letter-spacing:0.422px;">Key Sequence Edit</span><div class="b" style="left:0px;top:668px;width:298px;height:1px;background:#b8b8b8;"></div><div class="b" style="left:0px;top:669px;width:298px;height:36px;background:linear-gradient(#f6f6f6,#dadada);"></div><div class="b" style="left:0px;top:705px;width:298px;height:2px;background:#a9a9a9;"></div><svg class="b" style="left:4px;top:681px;" width="18" height="12" viewBox="4 681 18 12"><path d="M5 683l7 7l7-7" fill="none" stroke="#b2b2b2" stroke-width="2.8"/></svg><span class="t " style="left:62.50px;top:674.99px;font-size:26px;color:#000;letter-spacing:0.518px;">Display Widgets</span><svg class="b" style="left:6px;top:714px;overflow:visible;" width="44" height="44" viewBox="-1 -1 44 44"><path d="M6 8l14-4l20 18l-12 16l-22-20z" fill="#000" opacity="0.2" filter="url(#sh1)" transform="translate(1,3)"/><path d="M8 8l13-4l19 17l-12 15l-21-19z" fill="#f29a46" stroke="#1a1a1a" stroke-width="2" stroke-linejoin="round"/><path d="M15 17l9-7l13 11l-9 11z" fill="#fff"/><path d="M2 8q6-6 11 1" fill="none" stroke="#111" stroke-width="1.5"/><path d="M3 10q2 14 8 24" fill="none" stroke="#aaa" stroke-width="1"/></svg><span class="t " style="left:61.25px;top:724.68px;font-size:24px;color:#000;letter-spacing:0.875px;">Label</span><svg class="b" style="left:6px;top:770px;overflow:visible;" width="44" height="44" viewBox="-1 -1 44 44"><rect x="1" y="37" width="38" height="3" fill="#000" opacity="0.2" filter="url(#sh1)"/><rect x="1.8" y="1.8" width="37.4" height="36.4" rx="3" fill="url(#gBtn)" stroke="#555" stroke-width="1.4"/><text x="4.5" y="29" font-family="Liberation Serif, serif" font-style="italic" font-weight="700" font-size="28" fill="#1f7a2a">A</text><rect x="4.5" y="30.5" width="19" height="2" fill="#1f7a2a"/><text x="24" y="29" font-family="Liberation Serif, serif" font-size="28" fill="#222" stroke="#222" stroke-width="0.4">I</text></svg><span class="t " style="left:62.50px;top:780.68px;font-size:24px;color:#000;letter-spacing:0.545px;">Text Browser</span><svg class="b" style="left:6px;top:826px;overflow:visible;" width="44" height="44" viewBox="-1 -1 44 44"><circle cx="24" cy="27" r="15" fill="#2f62c8"/><path d="M0 11l24-9l6 22l-24 9z" fill="#3f8fe8"/><path d="M2 22l10-6l16 8l-22 8z" fill="#4aa83a"/><circle cx="22" cy="8" r="3" fill="#f4d23a"/><path d="M6 31l22-8l1 4l-22 8z" fill="#e8b060"/><text x="14" y="34" font-family="Liberation Serif, serif" font-weight="700" font-size="17" fill="#e8eefc">abc</text></svg><span class="t " style="left:62.00px;top:836.68px;font-size:24px;color:#000;letter-spacing:0.458px;">Graphics View</span><svg class="b" style="left:6px;top:882px;overflow:visible;" width="44" height="44" viewBox="-1 -1 44 44"><g transform="translate(-1.3,-6.5) scale(1.055,1.16)"><path d="M0 1h42v42h-42z" fill="#5a5a5a"/><rect x="5" y="2" width="36.5" height="38" fill="#f6f6f6"/><rect x="5" y="2" width="36.5" height="8" fill="#3a6fc8"/><rect x="5" y="9.5" width="36.5" height="1" fill="#8fb0e8"/><circle cx="17" cy="5.6" r="1.1" fill="#e8eefc"/><circle cx="29" cy="5.6" r="1.1" fill="#e8eefc"/><path d="M0 1l5 1v38l-5 3z" fill="#6e6e6e"/><path d="M0 43l5-3h36.5l0.5 3z" fill="#8a8a8a"/><text x="10" y="32" font-family="Liberation Sans, sans-serif" font-weight="700" font-size="22" fill="#b8202a" stroke="#b8202a" stroke-width="0.5" letter-spacing="-0.5">12</text></g></svg><span class="t " style="left:62.00px;top:892.68px;font-size:24px;color:#000;letter-spacing:0.679px;">Calendar Widget</span><svg class="b" style="left:6px;top:938px;overflow:visible;" width="44" height="44" viewBox="-1 -1 44 44"><rect x="1" y="36" width="38" height="4" fill="#000" opacity="0.3" filter="url(#sh1)"/><rect x="1.8" y="1.8" width="36.4" height="35.4" rx="3" fill="url(#gBtn)" stroke="#333" stroke-width="1.6"/><path d="M8 9v9h7M15 9v19M20 10h7v8h-7v9h7" fill="none" stroke="#1e7a1e" stroke-width="2.2"/><rect x="29" y="26" width="2.5" height="2.5" fill="#1e7a1e"/></svg><span class="t " style="left:61.25px;top:948.68px;font-size:24px;color:#000;letter-spacing:0.556px;">LCD Number</span><svg class="b" style="left:6px;top:994px;overflow:visible;" width="44" height="44" viewBox="-1 -1 44 44"><rect x="1" y="34.5" width="38" height="4" fill="#000" opacity="0.25" filter="url(#sh1)"/><rect x="1.8" y="17.3" width="36.4" height="18.4" rx="1.5" fill="#e4e4e4" stroke="#333" stroke-width="1.6"/><rect x="5.0" y="20.5" width="5" height="12" fill="#3f7a1e"/><rect x="11.4" y="20.5" width="5" height="12" fill="#5f9a3a"/><rect x="17.8" y="20.5" width="5" height="12" fill="#8ab86a"/><rect x="24.2" y="20.5" width="5" height="12" fill="#b4d0a0"/><rect x="30.6" y="20.5" width="5" height="12" fill="#d0dcc8"/></svg><span class="t " style="left:61.25px;top:1004.68px;font-size:24px;color:#000;letter-spacing:0.455px;">Progress Bar</span><svg class="b" style="left:6px;top:1050px;overflow:visible;" width="44" height="44" viewBox="-1 -1 44 44"><rect x="8" y="36" width="28" height="3" fill="#000" opacity="0.3" filter="url(#sh1)"/><rect x="8" y="6.5" width="28" height="1.8" fill="#111"/><rect x="8" y="13" width="28" height="3.5" fill="#111"/><rect x="8" y="21" width="28" height="5" fill="#111"/><rect x="8" y="30" width="28" height="7" fill="#111"/></svg><span class="t " style="left:61.25px;top:1060.68px;font-size:24px;color:#000;letter-spacing:0.679px;">Horizontal Line</span><svg class="b" style="left:6px;top:1106px;overflow:visible;" width="44" height="44" viewBox="-1 -1 44 44"><rect x="5" y="6" width="2" height="28" fill="#111"/><rect x="11.5" y="6" width="3.5" height="28" fill="#111"/><rect x="19" y="6" width="5.5" height="28" fill="#111"/><rect x="28.5" y="6" width="8" height="28" fill="#111"/><rect x="5" y="33" width="32" height="3" fill="#000" opacity="0.3" filter="url(#sh1)"/></svg><span class="t " style="left:63.00px;top:1116.68px;font-size:24px;color:#000;letter-spacing:0.583px;">Vertical Line</span><svg class="b" style="left:6px;top:1162px;overflow:visible;" width="44" height="44" viewBox="-1 -1 44 44"><rect x="0.4" y="5.4" width="42.4" height="33.4" fill="#e6e6e6"/><path d="M2 30l20-23h9l-29 32zM16 38l25-28v9l-17 19zM33 38l8-9v9z" fill="#c9c9c9"/><rect x="0.4" y="5.4" width="42.4" height="33.4" fill="none" stroke="#3f7fe0" stroke-width="1.6"/><rect x="2" y="7" width="39.2" height="30.2" fill="none" stroke="#fff" stroke-width="1.2" opacity="0.8"/></svg><span class="t " style="left:62.00px;top:1172.68px;font-size:24px;color:#000;letter-spacing:0.667px;">OpenGL Widget</span><svg class="b" style="left:6px;top:1218px;overflow:visible;" width="44" height="44" viewBox="-1 -1 44 44"><path d="M6 24l32-16v34l-14-8z" fill="#c8c8c8" stroke="#a8a8a8" stroke-width="0.8"/><path d="M38 8l-18 22l4 8z" fill="#b0b0b0"/><path d="M38 8l-18 22v9l5-6" fill="#9a9a9a" opacity="0.7"/></svg><span class="t " style="left:62.00px;top:1228.68px;font-size:24px;color:#000;letter-spacing:0.773px;">QQuickWidget</span><svg class="b" style="left:6px;top:1274px;overflow:visible;" width="44" height="44" viewBox="-1 -1 44 44"><ellipse cx="22" cy="41" rx="16" ry="2.5" fill="#000" opacity="0.25" filter="url(#sh1)"/><circle cx="21" cy="21" r="21" fill="url(#gGlobe)"/><path d="M12 8q6-4 12-3q-3 4 2 7q-6 2-6 7q-6-2-8 4q-5-6 0-15zM22 26q6-3 10 1q-1 8-8 10q-3-5-2-11z" fill="#dbe9fb" opacity="0.85"/></svg><span class="t " style="left:62.00px;top:1284.68px;font-size:24px;color:#000;letter-spacing:0.231px;">QWebEngineView</span><div class="b" style="left:0px;top:1324px;width:298px;height:1px;background:#b8b8b8;"></div><div class="b" style="left:0px;top:1325px;width:298px;height:36px;background:linear-gradient(#f6f6f6,#dadada);"></div><div class="b" style="left:0px;top:1361px;width:298px;height:2px;background:#a9a9a9;"></div><svg class="b" style="left:4px;top:1337px;" width="18" height="12" viewBox="4 1337 18 12"><path d="M5 1339l7 7l7-7" fill="none" stroke="#b2b2b2" stroke-width="2.8"/></svg><span class="t " style="left:70.25px;top:1330.99px;font-size:26px;color:#000;letter-spacing:0.521px;">CustomBattery</span><svg class="b" style="left:6px;top:1370px;" width="44" height="44" viewBox="0 0 44 44"><circle cx="22" cy="22" r="22" fill="#4cae50"/><path d="M22 10v24M10 22h24" stroke="#fff" stroke-width="6.2"/></svg><span class="t " style="left:63.00px;top:1380.68px;font-size:24px;color:#000;letter-spacing:0.500px;">AXBattery</span><div class="b" style="left:0px;top:1420px;width:298px;height:1px;background:#b8b8b8;"></div><div class="b" style="left:0px;top:1421px;width:298px;height:36px;background:linear-gradient(#f6f6f6,#dadada);"></div><div class="b" style="left:0px;top:1457px;width:298px;height:2px;background:#a9a9a9;"></div><svg class="b" style="left:4px;top:1433px;" width="18" height="12" viewBox="4 1433 18 12"><path d="M5 1435l7 7l7-7" fill="none" stroke="#b2b2b2" stroke-width="2.8"/></svg><span class="t " style="left:48.00px;top:1426.99px;font-size:26px;color:#000;letter-spacing:0.250px;">Display ...xamples]</span><svg class="b" style="left:6px;top:1472px;" width="44" height="32" viewBox="0 0 44 32"><path d="M4 0h40v24l-6 8h-38v-26z" fill="#68e08c"/><text x="8" y="25" font-family="Liberation Sans, sans-serif" font-size="26" fill="#fff" stroke="#fff" stroke-width="0.7" letter-spacing="-0.5">Qt</text></svg><span class="t " style="left:63.00px;top:1476.68px;font-size:24px;color:#000;letter-spacing:0.500px;">AnalogClock</span><div class="b" style="left:0px;top:1516px;width:298px;height:1px;background:#b8b8b8;"></div><div class="b" style="left:0px;top:1517px;width:298px;height:36px;background:linear-gradient(#f6f6f6,#dadada);"></div><div class="b" style="left:0px;top:1553px;width:298px;height:2px;background:#a9a9a9;"></div><svg class="b" style="left:4px;top:1529px;" width="18" height="12" viewBox="4 1529 18 12"><path d="M5 1531l7 7l7-7" fill="none" stroke="#b2b2b2" stroke-width="2.8"/></svg><span class="t c" style="left:133.00px;top:1524.40px;font-size:26px;color:#000;">便条</span><svg class="b" style="left:6px;top:1568px;" width="44" height="32" viewBox="0 0 44 32"><path d="M4 0h40v24l-6 8h-38v-26z" fill="#68e08c"/><text x="8" y="25" font-family="Liberation Sans, sans-serif" font-size="26" fill="#fff" stroke="#fff" stroke-width="0.7" letter-spacing="-0.5">Qt</text></svg><span class="t " style="left:61.50px;top:1572.68px;font-size:24px;color:#000;letter-spacing:0.708px;">btnSave</span><div class="b" style="left:0px;top:1612px;width:300px;height:2px;background:#a9a9a9;"></div><div class="b" style="left:1960px;top:128px;width:736px;height:1486px;background:#d4d4d4;"></div><div class="b" style="left:1960px;top:130px;width:1px;height:1484px;background:#8c8c8c;"></div><div class="b" style="left:2691px;top:130px;width:1px;height:1484px;background:#d0d0d0;"></div><div class="b" style="left:2692px;top:130px;width:0.3px;height:1484px;background:#d0d0d0;"></div><div class="b" style="left:2692.3px;top:130px;width:1.3px;height:1484px;background:#9e9e9e;"></div><div class="b" style="left:2693.6px;top:130px;width:2.4px;height:1484px;background:#d0d0d0;"></div><div class="b" style="left:1960px;top:128px;width:736px;height:2px;background:#bebebe;"></div><div class="b" style="left:1961px;top:130px;width:730px;height:41px;background:#ececec;"></div><div class="b" style="left:1961px;top:171px;width:730px;height:2px;background:#c4c4c4;"></div><svg class="b" style="left:1964px;top:134px;" width="70" height="32" viewBox="1964 134 70 32"><circle cx="1980" cy="150" r="14" fill="#5c5c5c"/><path d="M1975 145l10 10M1985 145l-10 10" stroke="#ececec" stroke-width="4.4" stroke-linecap="round"/><circle cx="2016" cy="150" r="14" fill="#5c5c5c"/><path d="M2013.2 147.4v-3.2h9.2v7.4h-3.2" fill="none" stroke="#ececec" stroke-width="2.6"/><rect x="2009.4" y="148.4" width="9.2" height="7.4" fill="none" stroke="#ececec" stroke-width="2.6"/></svg><span class="t c" style="left:2305.00px;top:141.70px;font-size:22px;color:#1e1e1e;letter-spacing:0.5px;">对象检查器</span><div class="b" style="left:1961px;top:173px;width:730px;height:3px;background:#e2e2e2;"></div><div class="b" style="left:1963px;top:175px;width:728px;height:40.4px;background:#fff;border:1px solid #cdcdcd;border-bottom:1.5px solid #a2a2a2;box-sizing:border-box;"></div><span class="t " style="left:1965.50px;top:182.99px;font-size:26px;color:#c4c4c4;letter-spacing:0.350px;">Filter</span><div class="b" style="left:1961px;top:236px;width:730px;height:381px;background:#e2e2e2;"></div><div class="b" style="left:1962.5px;top:236px;width:728.5px;height:381px;background:#fff;border:1.2px solid #c2c2c2;box-sizing:border-box;border-top:1.2px solid #8c8c8c;"></div><div class="b" style="left:1963.7px;top:237px;width:726.1px;height:35px;background:#ececec;"></div><span class="t c" style="left:1972.00px;top:242.90px;font-size:22px;color:#1a1a1a;letter-spacing:0.5px;">对象</span><span class="t c" style="left:2288.50px;top:242.90px;font-size:22px;color:#1a1a1a;">类</span><svg class="b" style="left:2251px;top:249px;" width="14" height="11" viewBox="2251 249 14 11"><path d="M2253.5 257.5l4.5-5l4.5 5" fill="none" stroke="#222" stroke-width="2.6"/></svg><div class="b" style="left:2277.5px;top:241px;width:2px;height:26px;background:#c6c6c6;"></div><div class="b" style="left:2687.8px;top:241px;width:2.2px;height:26px;background:#c0c0c0;"></div><div class="b" style="left:1963.7px;top:308px;width:726.1px;height:40px;background:#f1f3f2;"></div><div class="b" style="left:1963.7px;top:388px;width:726.1px;height:36px;background:#f1f3f2;"></div><div class="b" style="left:1963.7px;top:460px;width:726.1px;height:36px;background:#f1f3f2;"></div><div class="b" style="left:1963.7px;top:532px;width:726.1px;height:36px;background:#f1f3f2;"></div><div class="b" style="left:1963.7px;top:604px;width:726.1px;height:12px;background:#f1f3f2;"></div><div class="b" style="left:1963.7px;top:388px;width:120.3px;height:36px;background:#d4d4d4;"></div><div class="b" style="left:2084px;top:388px;width:195.5px;height:36px;background:#fff;"></div><div class="b" style="left:2279.5px;top:388px;width:410px;height:36px;background:#d4d4d4;"></div><svg class="b" style="left:1976px;top:285px;" width="18" height="12" viewBox="1976 285 18 12"><path d="M1977.5 286.5l7.5 7.5l7.5-7.5" fill="none" stroke="#b0b0b0" stroke-width="2.8"/></svg><svg class="b" style="left:2016px;top:324px;" width="18" height="12" viewBox="2016 324 18 12"><path d="M2017.5 325.5l7.5 7.5l7.5-7.5" fill="none" stroke="#b0b0b0" stroke-width="2.8"/></svg><svg class="b" style="left:2054px;top:312px;" width="34" height="36" viewBox="2054 312 34 36"><rect x="2057.5" y="316.5" width="25" height="7" rx="1" fill="url(#gLB)" stroke="#6f8dc4"/><rect x="2057.5" y="325.5" width="25" height="7" rx="1" fill="url(#gLB)" stroke="#6f8dc4"/><rect x="2057.5" y="334.5" width="25" height="7" rx="1" fill="url(#gLB)" stroke="#6f8dc4"/><ellipse cx="2070" cy="343" rx="11" ry="1.8" fill="#000" opacity="0.3" filter="url(#sh1)"/></svg><svg class="b" style="left:2289px;top:352px;" width="33" height="33" viewBox="2289 352 33 33"><circle cx="2305.5" cy="368" r="16" fill="#4cae50"/><path d="M2305.5 359.5v17M2297 368h17" stroke="#fff" stroke-width="4"/></svg><span class="t " style="left:2013.50px;top:276.99px;font-size:26px;color:#000;letter-spacing:0.333px;">MainWindow</span><span class="t " style="left:2290.00px;top:276.99px;font-size:26px;color:#000;letter-spacing:0.115px;">QMainWindow</span><span class="t " style="left:2098.00px;top:314.99px;font-size:26px;color:#000;letter-spacing:0.696px;">centralwidget</span><span class="t " style="left:2290.00px;top:314.99px;font-size:26px;color:#000;letter-spacing:0.458px;">QWidget</span><span class="t " style="left:2094.00px;top:353.99px;font-size:26px;color:#000;letter-spacing:0.269px;">aXBattery</span><span class="t " style="left:2335.50px;top:353.99px;font-size:26px;color:#000;letter-spacing:0.200px;">AXBattery</span><span class="t " style="left:2085.75px;top:392.99px;font-size:26px;color:#000;letter-spacing:0.500px;">horizontalSlider</span><span class="t " style="left:2290.00px;top:392.99px;font-size:26px;color:#000;letter-spacing:0.175px;">QSlider</span><span class="t " style="left:2053.50px;top:428.99px;font-size:26px;color:#000;letter-spacing:0.708px;">menubar</span><span class="t " style="left:2290.00px;top:428.99px;font-size:26px;color:#000;letter-spacing:0.107px;">QMenuBar</span><span class="t " style="left:2054.50px;top:464.99px;font-size:26px;color:#000;letter-spacing:0.725px;">statusbar</span><span class="t " style="left:2290.00px;top:464.99px;font-size:26px;color:#000;letter-spacing:0.200px;">QStatusBar</span><div class="b" style="left:1961px;top:616.2px;width:731px;height:2.6px;background:#a0a0a0;"></div><div class="b" style="left:1961px;top:619px;width:730px;height:42px;background:#ececec;"></div><div class="b" style="left:1961px;top:661px;width:730px;height:2px;background:#c4c4c4;"></div><svg class="b" style="left:1964px;top:624px;" width="70" height="32" viewBox="1964 624 70 32"><circle cx="1980" cy="640" r="14" fill="#5c5c5c"/><path d="M1975 635l10 10M1985 635l-10 10" stroke="#ececec" stroke-width="4.4" stroke-linecap="round"/><circle cx="2016" cy="640" r="14" fill="#5c5c5c"/><path d="M2013.2 637.4v-3.2h9.2v7.4h-3.2" fill="none" stroke="#ececec" stroke-width="2.6"/><rect x="2009.4" y="638.4" width="9.2" height="7.4" fill="none" stroke="#ececec" stroke-width="2.6"/></svg><span class="t c" style="left:2305.00px;top:631.70px;font-size:22px;color:#1e1e1e;letter-spacing:0.5px;">属性编辑器</span><div class="b" style="left:1961px;top:663px;width:730px;height:2px;background:#e6e6e6;"></div><div class="b" style="left:1961px;top:665px;width:730px;height:85px;background:linear-gradient(#ececec 0%,#e4e4e4 40%,#cdcdcd 100%);"></div><div class="b" style="left:1961px;top:750px;width:730px;height:2px;background:#bcbcbc;"></div><div class="b" style="left:1965px;top:687px;width:447px;height:40px;background:#fff;border:1px solid #c9c9c9;box-sizing:border-box;"></div><span class="t c" style="left:1968.50px;top:696.90px;font-size:26px;color:#c4c4c4;letter-spacing:0.5px;">过滤器</span><svg class="b" style="left:2430px;top:675px;" width="260" height="75" viewBox="2430 675 260 75"><path d="M2457.7 679.8h12.8q2 0 2 2v17.7h17.8q2 0 2 2v12.8q0 2-2 2h-17.8v17.7q0 2-2 2h-12.8q-2 0-2-2v-17.7h-18q-2 0-2-2v-12.8q0-2 2-2h18v-17.7q0-2 2-2z" fill="#4cc23a"/><path d="M2459.7 683.8h8.8v19.7h19.8v8.8h-19.8v19.7h-8.8v-19.7h-20v-8.8h20z" fill="url(#gPlusIn)"/><path d="M2487 736.5l7.5 7l7.5-7" fill="none" stroke="#222" stroke-width="2.2"/><rect x="2530" y="702" width="52" height="12" rx="2" fill="#f6cccc" stroke="#e08a8a" stroke-width="4"/><path d="M2627 730l30-36" stroke="#555" stroke-width="5" stroke-linecap="round"/><path d="M2626.5 729.5l30-36" stroke="#c4c4c4" stroke-width="1.4" stroke-linecap="round"/><path d="M2652 698q-3-10 6-13l3 2l-3 5l4 4l5-3l3 3q-3 9-12 7z" fill="#dedede" stroke="#9a9a9a" stroke-width="1"/><path d="M2670 736.5l7.5 7l7.5-7" fill="none" stroke="#222" stroke-width="2.2"/></svg><div class="b" style="left:1962.5px;top:753.3px;width:728.5px;height:34.7px;background:#dfdfdf;border:1.2px solid #b6b6b6;box-sizing:border-box;"></div><span class="t " style="left:1967.75px;top:758.99px;font-size:26px;color:#111;letter-spacing:0.320px;">horizontalSlider : QSlider</span><div class="b" style="left:1961px;top:788px;width:730px;height:4px;background:#e8e8e8;"></div><div class="b" style="left:1961px;top:792px;width:730px;height:337px;background:#e2e2e2;"></div><div class="b" style="left:1962.5px;top:792px;width:728.5px;height:337px;background:#fff;border:1.2px solid #c2c2c2;box-sizing:border-box;"></div><div class="b" style="left:1963.7px;top:793px;width:726.1px;height:35px;background:#ececec;"></div><div class="b" style="left:1963.7px;top:828px;width:726.1px;height:1px;background:#d2d2d2;"></div><div class="b" style="left:1963.7px;top:829px;width:726.1px;height:3px;background:#f4f4f4;"></div><span class="t c" style="left:1972.00px;top:798.70px;font-size:22px;color:#1a1a1a;">属性</span><span class="t c" style="left:2272.50px;top:798.70px;font-size:22px;color:#1a1a1a;">值</span><div class="b" style="left:2261.5px;top:797px;width:2px;height:26px;background:#c6c6c6;"></div><div class="b" style="left:2687.8px;top:797px;width:2.2px;height:26px;background:#c0c0c0;"></div><div class="b" style="left:1963.7px;top:832px;width:726.1px;height:37px;background:#befdc0;"></div><div class="b" style="left:1963.7px;top:869px;width:726.1px;height:2.5px;background:#dcdcdc;"></div><span class="t " style="left:2014.00px;top:837.99px;font-size:26px;color:#000;letter-spacing:0.625px;">minimum</span><span class="t " style="left:2274.00px;top:837.99px;font-size:26px;color:#000;">0</span><div class="b" style="left:1963.7px;top:871.5px;width:726.1px;height:37.5px;background:#e0fde1;"></div><div class="b" style="left:1963.7px;top:909.0px;width:726.1px;height:2.5px;background:#dcdcdc;"></div><span class="t " style="left:2014.00px;top:878.99px;font-size:26px;color:#000;font-weight:700;letter-spacing:0.683px;">maximum</span><span class="t " style="left:2273.75px;top:878.99px;font-size:26px;color:#000;letter-spacing:0.125px;">100</span><div class="b" style="left:1963.7px;top:911.5px;width:726.1px;height:37.5px;background:#befdc0;"></div><div class="b" style="left:1963.7px;top:949.0px;width:726.1px;height:2.5px;background:#dcdcdc;"></div><span class="t " style="left:2015.00px;top:918.49px;font-size:26px;color:#000;letter-spacing:0.378px;">singleStep</span><span class="t " style="left:2275.75px;top:918.49px;font-size:26px;color:#000;">1</span><div class="b" style="left:1963.7px;top:951.5px;width:726.1px;height:38.5px;background:#e0fde1;"></div><div class="b" style="left:1963.7px;top:990.0px;width:726.1px;height:2.5px;background:#dcdcdc;"></div><span class="t " style="left:2014.00px;top:958.49px;font-size:26px;color:#000;letter-spacing:0.550px;">pageStep</span><span class="t " style="left:2275.75px;top:958.49px;font-size:26px;color:#000;letter-spacing:0.788px;">10</span><div class="b" style="left:1963.7px;top:992px;width:726.1px;height:37.5px;background:#2047d8;"></div><span class="t " style="left:2015.50px;top:998.49px;font-size:26px;color:#fff;font-weight:700;letter-spacing:0.062px;">value</span><span class="t " style="left:2274.00px;top:998.49px;font-size:26px;color:#fff;letter-spacing:2.000px;">30</span><div class="b" style="left:1963.7px;top:1032px;width:726.1px;height:37px;background:#e0fde1;"></div><div class="b" style="left:1963.7px;top:1069px;width:726.1px;height:2.5px;background:#dcdcdc;"></div><span class="t " style="left:2015.00px;top:1038.49px;font-size:26px;color:#000;letter-spacing:0.404px;">sliderPosition</span><span class="t " style="left:2274.00px;top:1038.49px;font-size:26px;color:#000;letter-spacing:2.000px;">30</span><div class="b" style="left:1963.7px;top:1072px;width:726.1px;height:41.5px;background:#befdc0;"></div><div class="b" style="left:1963.7px;top:1113.5px;width:726.1px;height:2.5px;background:#dcdcdc;"></div><span class="t " style="left:2015.25px;top:1079.99px;font-size:26px;color:#000;letter-spacing:0.764px;">tracking</span><div class="b" style="left:1963.7px;top:1116px;width:726.1px;height:12px;background:#e0fde1;"></div><div class="b" style="left:1963.7px;top:1128px;width:726.1px;height:2.5px;background:#dcdcdc;"></div><div class="b" style="left:1963.7px;top:1029.5px;width:726.1px;height:2px;background:#3f72ee;"></div><div class="b" style="left:2261.3px;top:832px;width:2px;height:296px;background:#dadada;"></div><svg class="b" style="left:2277px;top:1079px;" width="28" height="28" viewBox="2277 1079 28 28"><rect x="2278" y="1080" width="25.5" height="26" rx="6" fill="#3b84f8"/><path d="M2283.5 1094l5.5 6l9.5-14" fill="none" stroke="#fff" stroke-width="3.4" stroke-linecap="round" stroke-linejoin="round"/></svg><div class="b" style="left:1963.7px;top:1116px;width:726.1px;height:12px;overflow:hidden;"><span class="t" style="left:53.5px;top:7px;font-size:26px;font-weight:700;letter-spacing:0.8px">orientation</span><span class="t" style="left:312px;top:7px;font-size:26px;letter-spacing:0.8px">Horizontal</span></div><div class="b" style="left:1961px;top:1128.2px;width:731px;height:2.6px;background:#a0a0a0;"></div><div class="b" style="left:1961px;top:1131px;width:730px;height:42px;background:#ececec;"></div><div class="b" style="left:1961px;top:1173px;width:730px;height:2px;background:#c4c4c4;"></div><svg class="b" style="left:1964px;top:1136px;" width="70" height="32" viewBox="1964 1136 70 32"><circle cx="1980" cy="1152" r="14" fill="#5c5c5c"/><path d="M1975 1147l10 10M1985 1147l-10 10" stroke="#ececec" stroke-width="4.4" stroke-linecap="round"/><circle cx="2016" cy="1152" r="14" fill="#5c5c5c"/><path d="M2013.2 1149.4v-3.2h9.2v7.4h-3.2" fill="none" stroke="#ececec" stroke-width="2.6"/><rect x="2009.4" y="1150.4" width="9.2" height="7.4" fill="none" stroke="#ececec" stroke-width="2.6"/></svg><span class="t c" style="left:2305.00px;top:1143.70px;font-size:22px;color:#1e1e1e;letter-spacing:0.5px;">动作编辑器</span><div class="b" style="left:1961px;top:1175px;width:730px;height:2px;background:#f6f6f6;"></div><div class="b" style="left:1961px;top:1177px;width:730px;height:64px;background:linear-gradient(#ececec 0%,#e0e0e0 45%,#c9c9c9 100%);"></div><div class="b" style="left:1961px;top:1241px;width:730px;height:3px;background:#bdbdbd;"></div><svg class="b" style="left:1970px;top:1180px;" width="350" height="62" viewBox="1970 1180 350 62"><path d="M1980 1230h34" stroke="#000" stroke-width="3" opacity="0.18" filter="url(#sh1)"/><path d="M1978.5 1189.5h23l12 12v28h-35z" fill="url(#gDoc)" stroke="#d0d0d0"/><path d="M2001.5 1189.5v12h12z" fill="#f6f6f6" stroke="#d0d0d0" stroke-linejoin="round"/><path d="M2062.5 1188.5h14l8 8v26h-22z" fill="#d8e2f4" stroke="#aebfe0"/><path d="M2051.5 1196.5h15l8 8v26h-23z" fill="url(#gDoc)" stroke="#aebfe0"/><path d="M2066.5 1196.5v8h8z" fill="#f2f4fa" stroke="#aebfe0" stroke-linejoin="round"/><path d="M2056 1231h28" stroke="#000" stroke-width="3" opacity="0.2" filter="url(#sh1)"/><path d="M2124 1229h30" stroke="#000" stroke-width="3" opacity="0.25" filter="url(#sh1)"/><rect x="2122.5" y="1192.5" width="22" height="33.5" rx="2" fill="url(#gClip)" stroke="#7a3c12"/><rect x="2126.5" y="1188.5" width="14" height="6" rx="2" fill="#ededed" stroke="#777"/><path d="M2138 1195.2h15l7.5 7.5v28.5h-22.5z" fill="#f1f1f1" stroke="#6f9ae0" stroke-width="1.2"/><path d="M2153 1195.2v7.5h7.5z" fill="#fff" stroke="#6f9ae0" stroke-width="0.8" stroke-linejoin="round"/><path d="M2126 1209q8-5 14-1v-4.5l8.5 8l-8.5 7.5v-4.5q-7-2-14 2z" fill="#2f6fd6" stroke="#e8eefc" stroke-width="1"/><path d="M2194.5 1190.5h22l12 12v27h-34z" fill="#ececec" stroke="#dadada"/><path d="M2216.5 1190.5v12h12z" fill="#f4f4f4" stroke="#dadada" stroke-linejoin="round"/><path d="M2204 1205l15 13M2219 1205l-15 13" stroke="#ec8e8e" stroke-width="4.5"/><path d="M2275 1212v-17q0-4 4-4h9l10 10v17q0 4-4 4h-8" fill="none" stroke="#222" stroke-width="2.4"/><path d="M2287 1192v6q0 4 4 4h6" fill="none" stroke="#222" stroke-width="2.4"/><circle cx="2275" cy="1219.5" r="7.5" fill="#222"/><circle cx="2271.5" cy="1219.5" r="1" fill="#fff"/><circle cx="2275" cy="1219.5" r="1" fill="#fff"/><circle cx="2278.5" cy="1219.5" r="1" fill="#fff"/><path d="M2297 1228.5l7.5 7l7.5-7" fill="none" stroke="#222" stroke-width="2.2"/></svg><div class="b" style="left:2441.5px;top:1189.5px;width:246.5px;height:39px;background:#fff;border:1px solid #c9c9c9;box-sizing:border-box;"></div><span class="t c" style="left:2444.50px;top:1198.40px;font-size:26px;color:#c4c4c4;letter-spacing:0.5px;">过滤器</span><div class="b" style="left:1961px;top:1244px;width:730px;height:327px;background:#e2e2e2;"></div><div class="b" style="left:1962.5px;top:1244px;width:728.5px;height:327px;background:#fff;border:1.2px solid #c2c2c2;box-sizing:border-box;"></div><div class="b" style="left:1963.7px;top:1245px;width:726.1px;height:34px;background:#ececec;"></div><span class="t c" style="left:1972.00px;top:1251.20px;font-size:22px;color:#1a1a1a;">名称</span><span class="t c" style="left:2172.00px;top:1251.20px;font-size:22px;color:#1a1a1a;">使用</span><span class="t c" style="left:2371.70px;top:1251.20px;font-size:22px;color:#1a1a1a;">文本</span><span class="t c" style="left:2571.70px;top:1251.20px;font-size:22px;color:#1a1a1a;letter-spacing:0.17px;">快捷方式</span><div class="b" style="left:2162px;top:1249px;width:2px;height:26px;background:#c6c6c6;"></div><div class="b" style="left:2361.5px;top:1249px;width:2px;height:26px;background:#c6c6c6;"></div><div class="b" style="left:2561.5px;top:1249px;width:2px;height:26px;background:#c6c6c6;"></div><div class="b" style="left:1962.6px;top:1571.4px;width:727px;height:20px;background:#cdcdcd;border-radius:0 0 9px 9px;box-shadow:0 0 0 1px #c4c4c4;"></div><div class="b" style="left:2039.8px;top:1572.8px;width:574.4px;height:40.4px;background:#fff;border-radius:10px;box-shadow:0 0 1px rgba(0,0,0,0.25);"></div><div class="b" style="left:2256px;top:1572.8px;width:182px;height:40.4px;background:linear-gradient(#438cfd,#3578f6);"></div><span class="t c" style="left:2058.00px;top:1581.40px;font-size:26px;color:#1a1a1a;letter-spacing:0.8px;">信号/槽 编辑器</span><span class="t c" style="left:2280.00px;top:1581.40px;font-size:26px;color:#fff;letter-spacing:0.75px;">动作编辑器</span><span class="t c" style="left:2463.00px;top:1581.40px;font-size:26px;color:#1a1a1a;letter-spacing:0.75px;">资源浏览器</span><svg class="b" style="left:200px;top:1365px;" width="180" height="65" viewBox="200 1365 180 65"><path d="M207 1396L260 1371.5L260 1391L374 1395.5L374 1406.5L260 1403L260 1424Z" fill="#e8402a"/></svg><span class="t c" style="left:399.00px;top:1375.00px;font-size:53.5px;color:#fff;letter-spacing:0.1px;">自定义插件</span><div class="b" style="left:0px;top:1613.5px;width:2696px;height:1.7px;background:#808080;"></div><div class="b" style="left:0px;top:1615.2px;width:2696px;height:4.8px;background:#ececec;"></div></body></html>
